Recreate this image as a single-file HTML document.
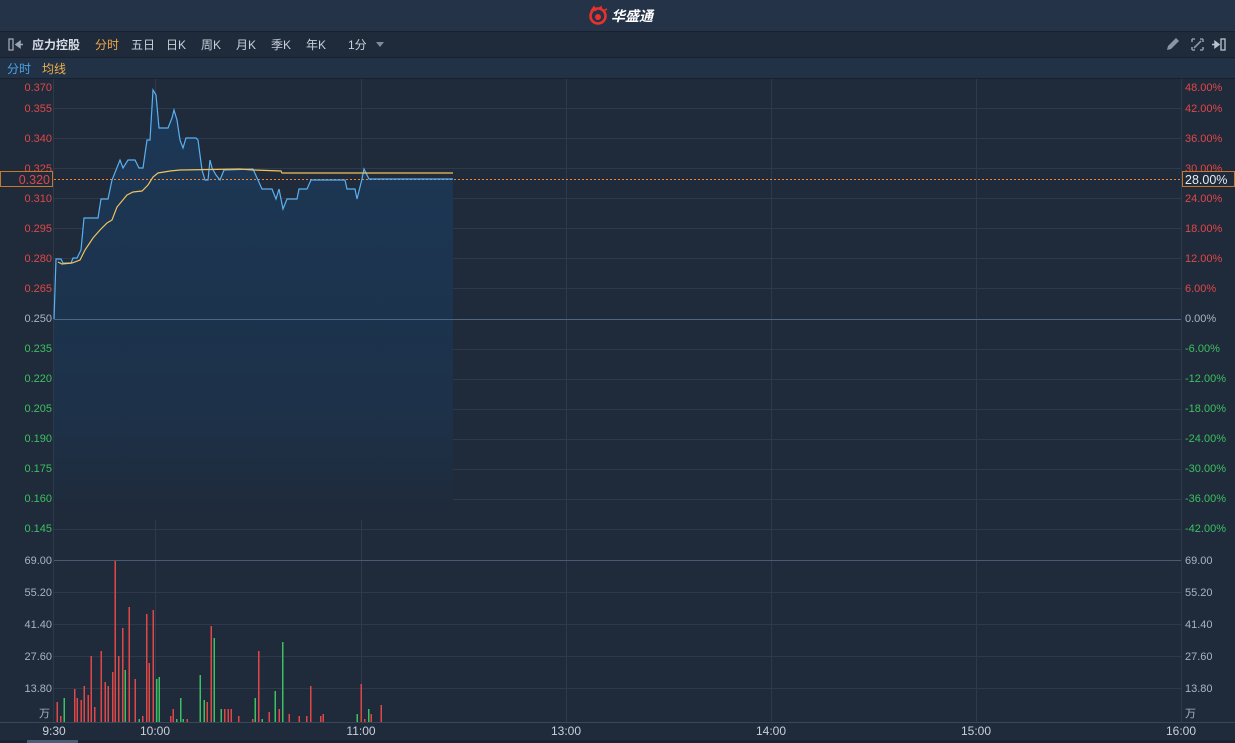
<!DOCTYPE html>
<html><head><meta charset="utf-8"><style>
html,body{margin:0;padding:0;background:#1f2a3a;width:1235px;height:743px;overflow:hidden;font-family:"Liberation Sans","Noto Sans CJK SC",sans-serif}
svg{position:absolute;left:0;top:0}
</style></head><body>
<svg width="1235" height="743" viewBox="0 0 1235 743" xmlns="http://www.w3.org/2000/svg" font-family="Liberation Sans, Noto Sans CJK SC, sans-serif">
<defs>
<linearGradient id="fg2" x1="0" y1="88" x2="0" y2="520" gradientUnits="userSpaceOnUse">
<stop offset="0" stop-color="#1b3857"/><stop offset="0.75" stop-color="#1d3149"/><stop offset="1" stop-color="#1f2a3a"/>
</linearGradient>
</defs>
<rect x="0" y="0" width="1235" height="743" fill="#1f2a3a"/>
<rect x="0" y="0" width="1235" height="31" fill="#243347"/>
<rect x="0" y="31" width="1235" height="1" fill="#18212d"/>
<rect x="0" y="32" width="1235" height="25" fill="#1f2b3b"/>
<rect x="0" y="57" width="1235" height="1" fill="#18212d"/>
<rect x="0" y="58" width="1235" height="20" fill="#213146"/>
<rect x="0" y="78" width="1235" height="1" fill="#18212d"/>
<g transform="translate(588,7)">
<circle cx="10" cy="9" r="7.5" fill="none" stroke="#e8322d" stroke-width="2.6"/>
<circle cx="10" cy="10" r="3" fill="#e8322d"/>
<path d="M3 4 L6 0 L8 4 M10 2 L13 0 L13 3 M15 4 L19 2" stroke="#e8322d" stroke-width="1.6" fill="none"/>
</g>
<text x="611" y="21" font-size="14" font-weight="bold" fill="#ffffff" font-style="italic">华盛通</text>
<rect x="9" y="39" width="4" height="11" fill="none" stroke="#9aa6b6" stroke-width="1.3"/>
<path d="M16 44.5 L20 41.5 L20 47.5 Z M19 44.5 H23" stroke="#9aa6b6" fill="#9aa6b6" stroke-width="1.5"/>
<text x="32" y="49" font-size="12" fill="#d6dde6" font-weight="bold">应力控股</text>
<text x="95" y="49" font-size="12" fill="#f0a84a">分时</text>
<text x="131" y="49" font-size="12" fill="#c8d0da">五日</text>
<text x="166" y="49" font-size="12" fill="#c8d0da">日K</text>
<text x="201" y="49" font-size="12" fill="#c8d0da">周K</text>
<text x="236" y="49" font-size="12" fill="#c8d0da">月K</text>
<text x="271" y="49" font-size="12" fill="#c8d0da">季K</text>
<text x="306" y="49" font-size="12" fill="#c8d0da">年K</text>
<text x="348" y="49" font-size="12" fill="#c8d0da">1分</text>
<path d="M376 42 L384 42 L380 47 Z" fill="#7f8b9a"/>
<path d="M1167 50 L1168 46 L1176 38 L1179 41 L1171 49 Z" fill="#8a96a6"/>
<g stroke="#8a96a6" stroke-width="1.6" fill="none">
<path d="M1192 39 h3 M1192 39 v3 M1203 39 h-3 M1203 39 v3 M1192 50 h3 M1192 50 v-3 M1203 50 h-3 M1203 50 v-3 M1194 48 L1201 41"/>
</g>
<path d="M1212 44.5 H1216 M1215 41.5 L1219 44.5 L1215 47.5 Z" stroke="#b8c2ce" fill="#b8c2ce" stroke-width="1.5"/>
<rect x="1221" y="39" width="4" height="11" fill="none" stroke="#b8c2ce" stroke-width="1.3"/>
<text x="7" y="73" font-size="12" fill="#4ea3e8">分时</text>
<text x="42" y="73" font-size="12" fill="#f0b04a">均线</text>

<g stroke="#2d3a4c" stroke-width="1">
<line x1="54" y1="108.5" x2="1181" y2="108.5"/><line x1="54" y1="138.5" x2="1181" y2="138.5"/>
<line x1="54" y1="168.5" x2="1181" y2="168.5"/><line x1="54" y1="198.5" x2="1181" y2="198.5"/>
<line x1="54" y1="228.5" x2="1181" y2="228.5"/><line x1="54" y1="258.5" x2="1181" y2="258.5"/>
<line x1="54" y1="288.5" x2="1181" y2="288.5"/>
<line x1="54" y1="349.5" x2="1181" y2="349.5"/><line x1="54" y1="379.5" x2="1181" y2="379.5"/>
<line x1="54" y1="409.5" x2="1181" y2="409.5"/><line x1="54" y1="439.5" x2="1181" y2="439.5"/>
<line x1="54" y1="469.5" x2="1181" y2="469.5"/><line x1="54" y1="499.5" x2="1181" y2="499.5"/>
<line x1="54" y1="529.5" x2="1181" y2="529.5"/>
<line x1="54" y1="592.5" x2="1181" y2="592.5"/><line x1="54" y1="624.5" x2="1181" y2="624.5"/>
<line x1="54" y1="656.5" x2="1181" y2="656.5"/><line x1="54" y1="688.5" x2="1181" y2="688.5"/>
<line x1="155.5" y1="79" x2="155.5" y2="722"/><line x1="361.5" y1="79" x2="361.5" y2="722"/>
<line x1="566.5" y1="79" x2="566.5" y2="722"/><line x1="771.5" y1="79" x2="771.5" y2="722"/>
<line x1="976.5" y1="79" x2="976.5" y2="722"/>
<line x1="53.5" y1="79" x2="53.5" y2="722"/><line x1="1181.5" y1="79" x2="1181.5" y2="722"/>
</g>
<line x1="54" y1="560.5" x2="1181" y2="560.5" stroke="#4a5a70"/>
<line x1="0" y1="722.5" x2="1235" y2="722.5" stroke="#3a4758"/>

<path d="M54,319 56,259 61,259 63,263 71,263 73,258 77,258 81,250 84,218 98,218 101,199 108,199 112,180 120,160 123,168 128,160 135,160 139,168 143,168 147,140 150,140 153,90 156,95 159,128 168,128 172,118 174,110 177,120 180,140 183,148 186,138 196,138 198,140 202,170 205,180 208,180 210,160 212,168 216,175 220,180 224,170 253,169 262,189 272,189 276,199 279,189 283,209 287,199 297,199 299,189 307,189 311,180 345,180 347,189 355,189 357,199 362,179 364,169 369,179 453,179 L453,520 L54,520 Z" fill="url(#fg2)"/>
<line x1="54" y1="319.5" x2="1181" y2="319.5" stroke="#4f6580"/>
<line x1="54" y1="179.5" x2="1181" y2="179.5" stroke="#e8893a" stroke-opacity="1" stroke-dasharray="2,2"/>
<polyline fill="none" stroke="#5bb0f0" stroke-width="1.2" points="54,319 56,259 61,259 63,263 71,263 73,258 77,258 81,250 84,218 98,218 101,199 108,199 112,180 120,160 123,168 128,160 135,160 139,168 143,168 147,140 150,140 153,90 156,95 159,128 168,128 172,118 174,110 177,120 180,140 183,148 186,138 196,138 198,140 202,170 205,180 208,180 210,160 212,168 216,175 220,180 224,170 253,169 262,189 272,189 276,199 279,189 283,209 287,199 297,199 299,189 307,189 311,180 345,180 347,189 355,189 357,199 362,179 364,169 369,179 453,179"/>
<polyline fill="none" stroke="#f3c25a" stroke-width="1.2" points="58,262 62,264 72,263 80,260 85,250 93,238 100,230 107,223 112,220 117,207 127,195 133,192 142,191 148,185 153,177 158,173 170,171 180,170 240,169 253,170 281,171 282,173 453,173"/>

<g font-size="11" text-anchor="end">
<text x="52" y="91" fill="#e04848">0.370</text>
<text x="52" y="112" fill="#e04848">0.355</text>
<text x="52" y="142" fill="#e04848">0.340</text>
<text x="52" y="172" fill="#e04848">0.325</text>
<text x="52" y="202" fill="#e04848">0.310</text>
<text x="52" y="232" fill="#e04848">0.295</text>
<text x="52" y="262" fill="#e04848">0.280</text>
<text x="52" y="292" fill="#e04848">0.265</text>
<text x="52" y="322" fill="#aab4c0">0.250</text>
<text x="52" y="352" fill="#3cc060">0.235</text>
<text x="52" y="382" fill="#3cc060">0.220</text>
<text x="52" y="412" fill="#3cc060">0.205</text>
<text x="52" y="442" fill="#3cc060">0.190</text>
<text x="52" y="472" fill="#3cc060">0.175</text>
<text x="52" y="502" fill="#3cc060">0.160</text>
<text x="52" y="532" fill="#3cc060">0.145</text>
<text x="52" y="564" fill="#aab4c0">69.00</text>
<text x="52" y="596" fill="#aab4c0">55.20</text>
<text x="52" y="628" fill="#aab4c0">41.40</text>
<text x="52" y="660" fill="#aab4c0">27.60</text>
<text x="52" y="692" fill="#aab4c0">13.80</text>
<text x="50" y="717" fill="#aab4c0">万</text>
</g>
<rect x="0.5" y="171.5" width="52" height="15" fill="#1f2a3a" stroke="#c8782a"/>
<text x="50" y="184" font-size="12.5" fill="#e04848" text-anchor="end">0.320</text>
<g font-size="11">
<text x="1185" y="91" fill="#e04848">48.00%</text>
<text x="1185" y="112" fill="#e04848">42.00%</text>
<text x="1185" y="142" fill="#e04848">36.00%</text>
<text x="1185" y="172" fill="#e04848">30.00%</text>
<text x="1185" y="202" fill="#e04848">24.00%</text>
<text x="1185" y="232" fill="#e04848">18.00%</text>
<text x="1185" y="262" fill="#e04848">12.00%</text>
<text x="1185" y="292" fill="#e04848">6.00%</text>
<text x="1185" y="322" fill="#aab4c0">0.00%</text>
<text x="1185" y="352" fill="#3cc060">-6.00%</text>
<text x="1185" y="382" fill="#3cc060">-12.00%</text>
<text x="1185" y="412" fill="#3cc060">-18.00%</text>
<text x="1185" y="442" fill="#3cc060">-24.00%</text>
<text x="1185" y="472" fill="#3cc060">-30.00%</text>
<text x="1185" y="502" fill="#3cc060">-36.00%</text>
<text x="1185" y="532" fill="#3cc060">-42.00%</text>
<text x="1185" y="564" fill="#aab4c0">69.00</text>
<text x="1185" y="596" fill="#aab4c0">55.20</text>
<text x="1185" y="628" fill="#aab4c0">41.40</text>
<text x="1185" y="660" fill="#aab4c0">27.60</text>
<text x="1185" y="692" fill="#aab4c0">13.80</text>
<text x="1185" y="717" fill="#aab4c0">万</text>
</g>
<rect x="1182.5" y="171.5" width="52" height="15" fill="#1f2a3a" stroke="#c8782a"/>
<text x="1185" y="184" font-size="12.5" fill="#e6ecf2">28.00%</text>

<g stroke-width="1.3" shape-rendering="crispEdges">
<line x1="57.3" y1="722" x2="57.3" y2="702" stroke="#e04848"/><line x1="60.7" y1="722" x2="60.7" y2="716" stroke="#e04848"/><line x1="64.3" y1="722" x2="64.3" y2="698" stroke="#3cc060"/><line x1="74.7" y1="722" x2="74.7" y2="689" stroke="#e04848"/><line x1="77.3" y1="722" x2="77.3" y2="698" stroke="#e04848"/><line x1="81.3" y1="722" x2="81.3" y2="700" stroke="#e04848"/><line x1="84.3" y1="722" x2="84.3" y2="686" stroke="#e04848"/><line x1="88.3" y1="722" x2="88.3" y2="695" stroke="#e04848"/><line x1="91.3" y1="722" x2="91.3" y2="656" stroke="#e04848"/><line x1="94.7" y1="722" x2="94.7" y2="707" stroke="#e04848"/><line x1="101.3" y1="722" x2="101.3" y2="651" stroke="#e04848"/><line x1="105.3" y1="722" x2="105.3" y2="682" stroke="#e04848"/><line x1="108.3" y1="722" x2="108.3" y2="686" stroke="#e04848"/><line x1="112.7" y1="722" x2="112.7" y2="672" stroke="#e04848"/><line x1="115.3" y1="722" x2="115.3" y2="561" stroke="#e04848"/><line x1="118.7" y1="722" x2="118.7" y2="656" stroke="#e04848"/><line x1="122.7" y1="722" x2="122.7" y2="628" stroke="#e04848"/><line x1="125.3" y1="722" x2="125.3" y2="670" stroke="#3cc060"/><line x1="129.3" y1="722" x2="129.3" y2="607" stroke="#e04848"/><line x1="135.3" y1="722" x2="135.3" y2="679" stroke="#e04848"/><line x1="139.3" y1="722" x2="139.3" y2="719" stroke="#3cc060"/><line x1="142.7" y1="722" x2="142.7" y2="716" stroke="#e04848"/><line x1="146.7" y1="722" x2="146.7" y2="614" stroke="#e04848"/><line x1="149.3" y1="722" x2="149.3" y2="663" stroke="#e04848"/><line x1="153.3" y1="722" x2="153.3" y2="610" stroke="#e04848"/><line x1="156.7" y1="722" x2="156.7" y2="679" stroke="#3cc060"/><line x1="159.3" y1="722" x2="159.3" y2="677" stroke="#3cc060"/><line x1="170.7" y1="722" x2="170.7" y2="716" stroke="#e04848"/><line x1="173.3" y1="722" x2="173.3" y2="709" stroke="#e04848"/><line x1="176.7" y1="722" x2="176.7" y2="719" stroke="#3cc060"/><line x1="180.7" y1="722" x2="180.7" y2="698" stroke="#3cc060"/><line x1="183.3" y1="722" x2="183.3" y2="719" stroke="#3cc060"/><line x1="187.3" y1="722" x2="187.3" y2="719" stroke="#e04848"/><line x1="200.3" y1="722" x2="200.3" y2="675" stroke="#3cc060"/><line x1="204.3" y1="722" x2="204.3" y2="700" stroke="#3cc060"/><line x1="207.3" y1="722" x2="207.3" y2="702" stroke="#e04848"/><line x1="211.3" y1="722" x2="211.3" y2="626" stroke="#e04848"/><line x1="214.3" y1="722" x2="214.3" y2="638" stroke="#3cc060"/><line x1="221.3" y1="722" x2="221.3" y2="709" stroke="#3cc060"/><line x1="224.7" y1="722" x2="224.7" y2="709" stroke="#e04848"/><line x1="228.3" y1="722" x2="228.3" y2="709" stroke="#e04848"/><line x1="231.3" y1="722" x2="231.3" y2="709" stroke="#e04848"/><line x1="238.7" y1="722" x2="238.7" y2="716" stroke="#e04848"/><line x1="252.7" y1="722" x2="252.7" y2="719" stroke="#e04848"/><line x1="255.3" y1="722" x2="255.3" y2="698" stroke="#3cc060"/><line x1="258.7" y1="722" x2="258.7" y2="651" stroke="#e04848"/><line x1="262.3" y1="722" x2="262.3" y2="719" stroke="#3cc060"/><line x1="269.3" y1="722" x2="269.3" y2="712" stroke="#e04848"/><line x1="275.3" y1="722" x2="275.3" y2="691" stroke="#3cc060"/><line x1="279.3" y1="722" x2="279.3" y2="709" stroke="#e04848"/><line x1="282.7" y1="722" x2="282.7" y2="642" stroke="#3cc060"/><line x1="289.3" y1="722" x2="289.3" y2="714" stroke="#e04848"/><line x1="299.3" y1="722" x2="299.3" y2="716" stroke="#e04848"/><line x1="306.7" y1="722" x2="306.7" y2="716" stroke="#e04848"/><line x1="310.7" y1="722" x2="310.7" y2="686" stroke="#e04848"/><line x1="320.7" y1="722" x2="320.7" y2="716" stroke="#e04848"/><line x1="323.3" y1="722" x2="323.3" y2="714" stroke="#e04848"/><line x1="357.3" y1="722" x2="357.3" y2="714" stroke="#3cc060"/><line x1="361.3" y1="722" x2="361.3" y2="684" stroke="#e04848"/><line x1="364.7" y1="722" x2="364.7" y2="719" stroke="#e04848"/><line x1="368.7" y1="722" x2="368.7" y2="709" stroke="#3cc060"/><line x1="371.3" y1="722" x2="371.3" y2="714" stroke="#e04848"/><line x1="381.3" y1="722" x2="381.3" y2="705" stroke="#e04848"/>
</g>

<g font-size="12" fill="#c8d0da" text-anchor="middle">
<text x="54" y="735">9:30</text>
<text x="155" y="735">10:00</text>
<text x="361" y="735">11:00</text>
<text x="566" y="735">13:00</text>
<text x="771" y="735">14:00</text>
<text x="976" y="735">15:00</text>
<text x="1181" y="735">16:00</text>
</g>
<rect x="0" y="740" width="1235" height="3" fill="#1a2330"/>
<rect x="27" y="740" width="51" height="3" fill="#4a5d76"/>
</svg>
</body></html>
